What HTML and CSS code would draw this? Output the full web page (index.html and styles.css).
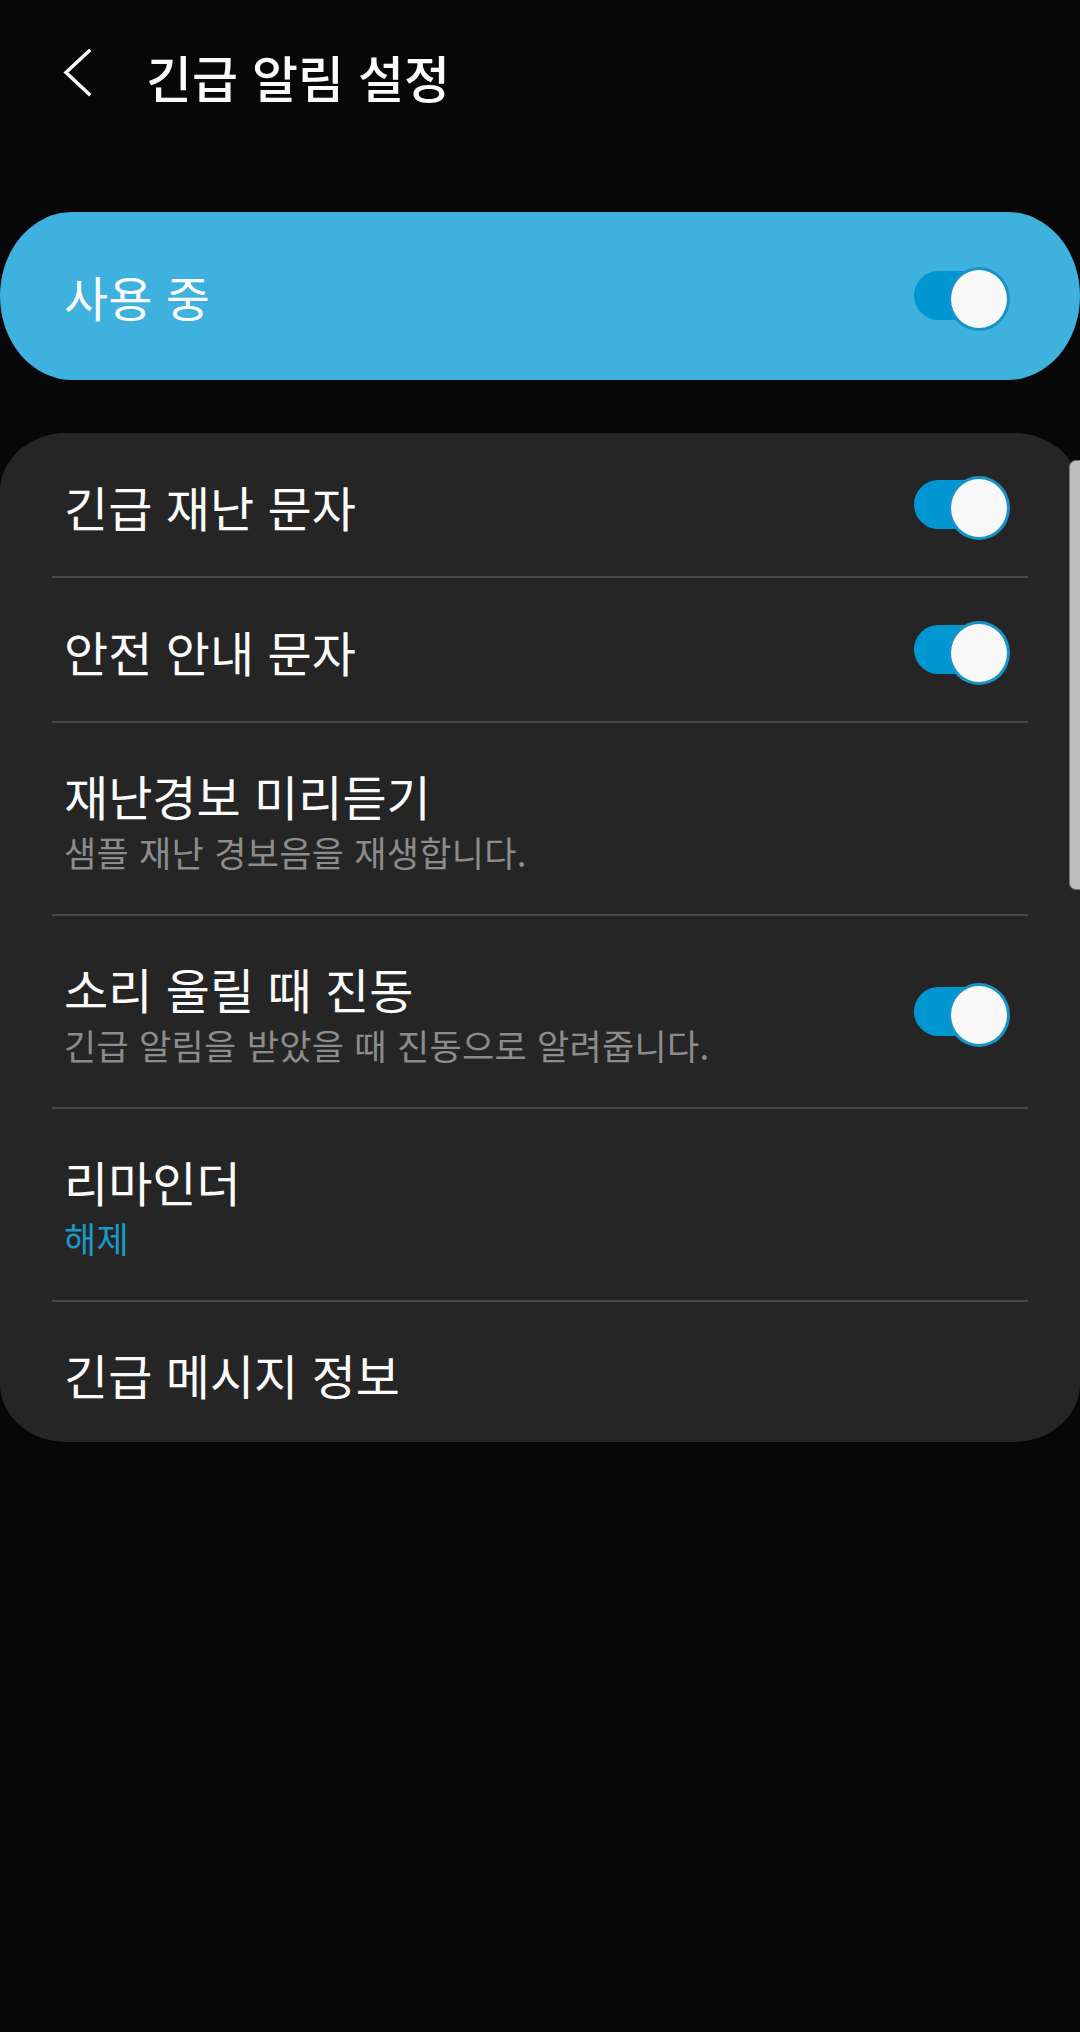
FILE: index.html
```html
<!DOCTYPE html>
<html lang="ko">
    <head>
        <meta charset="UTF-8">
        <meta name="viewport" content="width=device-width, initial-scale=1.0">
        <title>긴급 알림 설정</title>
        <link rel="stylesheet" href="styles.css">
    </head>
    <body>
        <div class="screen">
            <header class="header">
                <svg class="back" width="40" height="48" viewBox="0 0 40 48">
                    <polyline points="33,2 10,23.5 33,45" fill="none" stroke="#fafafa" stroke-width="3.5" stroke-linecap="square"/>
                </svg>
                <h1>긴급 알림 설정</h1>
            </header>

            <div class="master">
                <span class="master-label">사용 중</span>
                <span class="switch"></span>
            </div>

            <div class="card">
                <div class="row">
                    <div class="text">
                        <div class="title">긴급 재난 문자</div>
                    </div>
                    <span class="switch"></span>
                </div>
                <div class="row">
                    <div class="text">
                        <div class="title">안전 안내 문자</div>
                    </div>
                    <span class="switch"></span>
                </div>
                <div class="row tall">
                    <div class="text">
                        <div class="title">재난경보 미리듣기</div>
                        <div class="sub">샘플 재난 경보음을 재생합니다.</div>
                    </div>
                </div>
                <div class="row tall">
                    <div class="text">
                        <div class="title">소리 울릴 때 진동</div>
                        <div class="sub">긴급 알림을 받았을 때 진동으로 알려줍니다.</div>
                    </div>
                    <span class="switch"></span>
                </div>
                <div class="row tall">
                    <div class="text">
                        <div class="title">리마인더</div>
                        <div class="sub accent">해제</div>
                    </div>
                </div>
                <div class="row last">
                    <div class="text">
                        <div class="title">긴급 메시지 정보</div>
                    </div>
                </div>
            </div>

            <div class="scrollbar"></div>
        </div>
    </body>
</html>
```

FILE: styles.css
```css
* {
    margin: 0;
    padding: 0;
    box-sizing: border-box;
}

body {
    background: #070707;
    font-family: 'Noto Sans CJK KR', 'Noto Sans', sans-serif;
    color: #fafafa;
}

.screen {
    position: relative;
    width: 1080px;
    min-height: 2032px;
}

/* Header */
.header {
    display: flex;
    align-items: center;
    height: 158px;
    margin-bottom: 54px;
}

.back {
    margin-left: 56px;
    margin-bottom: 12px;
}

.header h1 {
    margin-left: 50px;
    padding-bottom: 6px;
    font-size: 50px;
    font-weight: 500;
    line-height: 58px;
}

/* Master switch */
.master {
    display: flex;
    align-items: center;
    justify-content: space-between;
    height: 168px;
    padding: 0 70px 0 64px;
    background: #3fb1de;
    border-radius: 72px / 84px;
}

.master-label {
    font-size: 48px;
    line-height: 58px;
}

/* Switch */
.switch {
    position: relative;
    flex-shrink: 0;
    width: 96px;
    height: 58px;
}

.switch::before {
    content: '';
    position: absolute;
    left: 0;
    top: 4px;
    width: 80px;
    height: 49px;
    background: #0096d1;
    border-radius: 25px;
}

.switch::after {
    content: '';
    position: absolute;
    right: 0;
    top: 0;
    width: 56px;
    height: 58px;
    background: #f9f9f9;
    border: 3px solid #1893c6;
    border-radius: 50%;
}

/* List card */
.card {
    margin-top: 53px;
    padding: 0 52px;
    background: #252525;
    border-radius: 66px / 58px;
}

.row {
    display: flex;
    align-items: center;
    justify-content: space-between;
    min-height: 145px;
    padding-right: 18px;
    border-bottom: 2px solid #474747;
}

.row.tall {
    min-height: 193px;
}

.row.last {
    min-height: 140px;
    border-bottom: none;
}

.text {
    padding-left: 12px;
    padding-top: 3px;
}

.row.tall .text {
    padding-top: 8px;
}

.title {
    font-size: 48px;
    line-height: 58px;
}

.sub {
    font-size: 35px;
    line-height: 56px;
    letter-spacing: 0.3px;
    color: #8c8c8c;
}

.sub.accent {
    color: #1c99c9;
}

/* Scroll indicator */
.scrollbar {
    position: absolute;
    right: 0;
    top: 460px;
    width: 11px;
    height: 430px;
    background: #bdbdbd;
    border: 1px solid #777;
    border-right: none;
    border-radius: 7px 0 0 7px;
}
```
